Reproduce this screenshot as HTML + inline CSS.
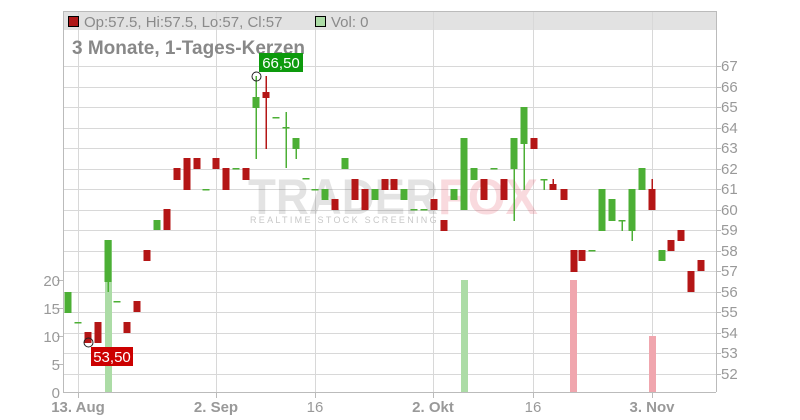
<!DOCTYPE html>
<html><head><meta charset="utf-8"><style>
body{margin:0;background:#fff;width:800px;height:420px;overflow:hidden}
svg{display:block;font-family:"Liberation Sans",sans-serif}
</style></head><body>
<svg id="s" width="800" height="420" xmlns="http://www.w3.org/2000/svg">
<rect x="63" y="11" width="653" height="19" fill="#e2e2e2"/>
<g id="grid" stroke="#d8d8d8" stroke-width="1"></g>
<g stroke="#d8d8d8">
<line x1="78.5" y1="11" x2="78.5" y2="392"/><line x1="216.5" y1="11" x2="216.5" y2="392"/>
<line x1="315.5" y1="11" x2="315.5" y2="392"/><line x1="433.5" y1="11" x2="433.5" y2="392"/>
<line x1="533.5" y1="11" x2="533.5" y2="392"/><line x1="652.5" y1="11" x2="652.5" y2="392"/>
</g>
<g opacity="0.16" font-weight="bold" font-size="50">
<text x="248" y="214" fill="#555" textLength="190" lengthAdjust="spacingAndGlyphs">TRADER</text>
<text x="438" y="214" fill="#e0203a" textLength="100" lengthAdjust="spacingAndGlyphs">FOX</text>
</g>
<text x="250" y="223" font-size="9" fill="#c8c8c8" letter-spacing="2.3">REALTIME STOCK SCREENING</text>
<rect x="105" y="240" width="7" height="152" fill="#acdca6"/>
<rect x="461" y="280" width="7" height="112" fill="#acdca6"/>
<rect x="570" y="280" width="7" height="112" fill="#f0a6ae"/>
<rect x="649" y="336" width="7" height="56" fill="#f0a6ae"/>
<g id="c"></g>
<line x1="63.5" y1="11" x2="63.5" y2="392" stroke="#bbb"/>
<line x1="716.5" y1="11" x2="716.5" y2="392" stroke="#bbb"/>
<line x1="63" y1="392.5" x2="716" y2="392.5" stroke="#bbb"/>
<line x1="63" y1="11.5" x2="716" y2="11.5" stroke="#bbb"/>
<g stroke="#bbb"><line x1="57" y1="280.5" x2="63" y2="280.5"/><line x1="57" y1="308.5" x2="63" y2="308.5"/><line x1="57" y1="336.5" x2="63" y2="336.5"/><line x1="57" y1="364.5" x2="63" y2="364.5"/>
<line x1="78.5" y1="392" x2="78.5" y2="398"/><line x1="216.5" y1="392" x2="216.5" y2="398"/><line x1="315.5" y1="392" x2="315.5" y2="398"/><line x1="433.5" y1="392" x2="433.5" y2="398"/><line x1="533.5" y1="392" x2="533.5" y2="398"/><line x1="652.5" y1="392" x2="652.5" y2="398"/></g>
<g font-size="15" fill="#999" text-anchor="end">
<text x="60" y="286">20</text><text x="60" y="314">15</text><text x="60" y="342">10</text><text x="60" y="370">5</text><text x="60" y="398">0</text>
</g>
<g id="rl" font-size="15" fill="#999"></g>
<g font-size="15" fill="#999" text-anchor="middle">
<text x="78" y="412" font-weight="bold">13. Aug</text>
<text x="216" y="412" font-weight="bold">2. Sep</text>
<text x="315" y="412">16</text>
<text x="433" y="412" font-weight="bold">2. Okt</text>
<text x="533" y="412">16</text>
<text x="652" y="412" font-weight="bold">3. Nov</text>
</g>
<rect x="68.5" y="16.5" width="10" height="10" fill="#b01818" stroke="#000"/>
<text x="84" y="27" font-size="15" fill="#8a8a8a">Op:57.5, Hi:57.5, Lo:57, Cl:57</text>
<rect x="315.5" y="16.5" width="10" height="10" fill="#acdca6" stroke="#000"/>
<text x="331" y="27" font-size="15" fill="#8a8a8a">Vol: 0</text>
<text x="72" y="54" font-size="19" font-weight="bold" fill="#888" textLength="233" lengthAdjust="spacingAndGlyphs">3 Monate, 1-Tages-Kerzen</text>
<circle cx="256.5" cy="76.5" r="4.5" fill="none" stroke="#222"/>
<circle cx="88.5" cy="342.5" r="4.5" fill="none" stroke="#222"/>
<rect x="259" y="53" width="44" height="19" fill="#0d9a0d"/>
<text x="281" y="68" font-size="15" fill="#fff" text-anchor="middle">66,50</text>
<rect x="91" y="347" width="42" height="19" fill="#cc0000"/>
<text x="112" y="362" font-size="15" fill="#fff" text-anchor="middle">53,50</text>
</svg>
<script>
var NS="http://www.w3.org/2000/svg";
function el(p,t,a){var e=document.createElementNS(NS,t);for(var k in a)e.setAttribute(k,a[k]);p.appendChild(e);return e}
var g=document.getElementById('grid'),rl=document.getElementById('rl');
for(var p=52;p<=67;p++){var y=Math.round(66+(67-p)*20.5)+0.5;el(g,'line',{x1:63,y1:y,x2:716,y2:y});
el(document.getElementById('s'),'line',{x1:716,y1:y,x2:721,y2:y,stroke:'#bbb'});
var t=el(rl,'text',{x:721,y:y+4.5});t.textContent=p;}
var G='#4caf35',R='#b41616';
var C=[[68,G,292,313],[78,G,322,323],[88,R,332,343],[98,R,322,343],[108,G,240,282,240,292],[117,G,301,302],[127,R,322,333],[137,R,301,312],[147,R,250,261],
[157,G,220,230],[167,R,209,230],[177,R,168,180],[187,R,158,190],[197,R,158,169],[206,G,189,190],[216,R,158,169],[226,R,168,190],[236,G,168,169],[246,R,168,180],
[256,G,97,108,76,159],[266,R,92,98,76,149],[276,G,117,118],[286,G,127,128,112,168],[296,G,138,149,138,159],[306,G,178,179],[315,G,189,190],[325,G,189,200],[335,R,199,210],
[345,G,158,169],[355,R,179,200],[365,R,189,210],[375,G,189,200],[385,R,179,190],[394,R,179,190],[404,G,189,200],[414,G,209,210],[424,G,209,210],[434,R,199,210],[444,R,220,231],
[454,G,189,200],[464,G,138,210],[474,G,168,180],[484,R,179,200],[494,G,168,169],[504,R,179,200],[514,G,138,169,138,221],[524,G,107,144,107,190],[534,R,138,149],[544,G,179,180,179,190],[553,R,184,190,179,190],
[564,R,189,200],[574,R,250,272],[582,R,250,261],[592,G,250,251],[602,G,189,231],[612,G,199,221],[622,G,220,221,220,231],[632,G,189,231,189,241],[642,G,168,190],[652,R,189,210,179,210],
[662,G,250,261],[671,R,240,251],[681,R,230,241],[691,R,271,292],[701,R,260,271]];
var c=document.getElementById('c');
C.forEach(function(d){var x=d[0],col=d[1];
if(d[4]!==undefined)el(c,'rect',{x:x-0.5,y:d[4],width:1.5,height:d[5]-d[4],fill:col});
var h=d[3]-d[2];if(h<2){el(c,'rect',{x:x-3.5,y:d[2],width:7,height:1.5,fill:col})}else el(c,'rect',{x:x-3.5,y:d[2],width:7,height:h,fill:col});});
</script>
</body></html>
